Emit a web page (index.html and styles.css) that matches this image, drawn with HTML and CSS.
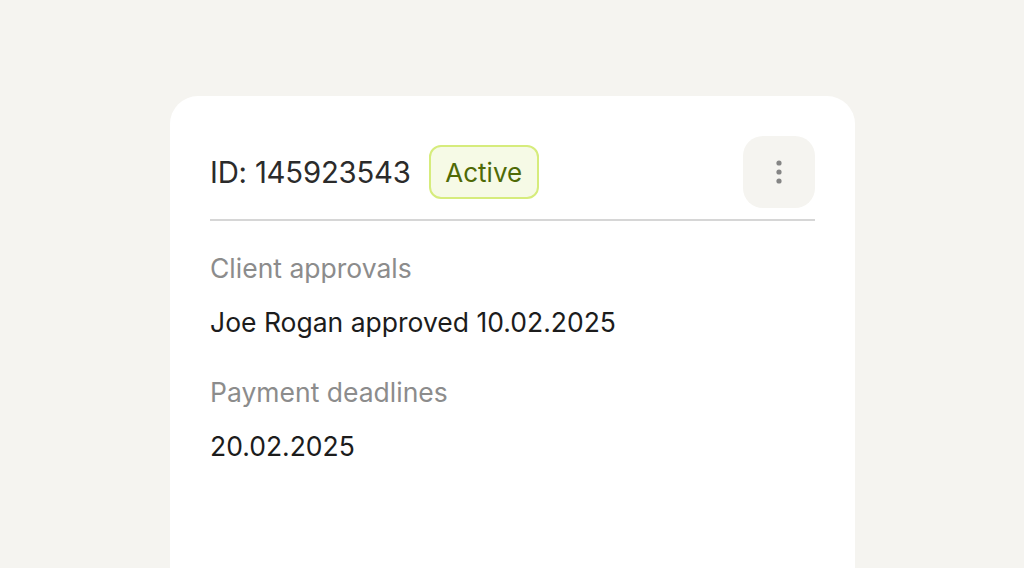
FILE: index.html
```html
<!DOCTYPE html>
<html lang="en">
<head>
<meta charset="utf-8">
<title>Card</title>
<link rel="stylesheet" href="styles.css">
</head>
<body>
<div class="page">
  <div class="card">
    <div class="card-header">
      <div class="title-group">
        <span class="id">ID: 145923543</span>
        <span class="badge">Active</span>
      </div>
      <button class="menu-btn" aria-label="More">
        <svg width="8" height="26" viewBox="0 0 8 26"><circle cx="4" cy="4" r="2.6" fill="#858585"/><circle cx="4" cy="13" r="2.6" fill="#858585"/><circle cx="4" cy="22" r="2.6" fill="#858585"/></svg>
      </button>
    </div>
    <div class="divider"></div>
    <div class="section">
      <div class="label">Client approvals</div>
      <div class="value">Joe Rogan approved 10.02.2025</div>
    </div>
    <div class="section">
      <div class="label">Payment deadlines</div>
      <div class="value">20.02.2025</div>
    </div>
  </div>
</div>
</body>
</html>
```

FILE: styles.css
```css
html, body {
  margin: 0;
  padding: 0;
  background: #f5f4f0;
  font-family: Inter, "Noto Sans", sans-serif;
}
.page {
  padding: 96px 0 0 170px;
  height: 568px;
  box-sizing: border-box;
  overflow: hidden;
}
.card {
  width: 685px;
  height: 520px;
  box-sizing: border-box;
  background: #fff;
  border-radius: 28px;
  padding: 40px 40px;
}
.card-header {
  display: flex;
  align-items: center;
  justify-content: space-between;
  height: 72px;
}
.title-group {
  display: flex;
  align-items: center;
  gap: 18px;
}
.id {
  font-size: 29.3px;
  color: #2b2b2b;
  letter-spacing: -0.2px;
}
.badge {
  display: inline-flex;
  align-items: center;
  justify-content: center;
  width: 110px;
  height: 54px;
  box-sizing: border-box;
  border: 2px solid #d6ec7c;
  background: #f6fae6;
  border-radius: 12px;
  color: #4f6a06;
  font-size: 26px;
}
.menu-btn {
  width: 72px;
  height: 72px;
  border: none;
  border-radius: 20px;
  background: #f5f4f0;
  display: flex;
  align-items: center;
  justify-content: center;
  padding: 0;
}
.divider {
  height: 2px;
  background: #d6d6d6;
  margin-top: 11px;
}
.section {
  margin-top: 31px;
  display: flex;
  flex-direction: column;
  gap: 22px;
}
.section + .section {
  margin-top: 38px;
}
.label {
  font-size: 26.5px;
  color: #8c8c8c;
  line-height: 32px;
}
.value {
  font-size: 26.5px;
  color: #1c1c1c;
  line-height: 32px;
}
```
